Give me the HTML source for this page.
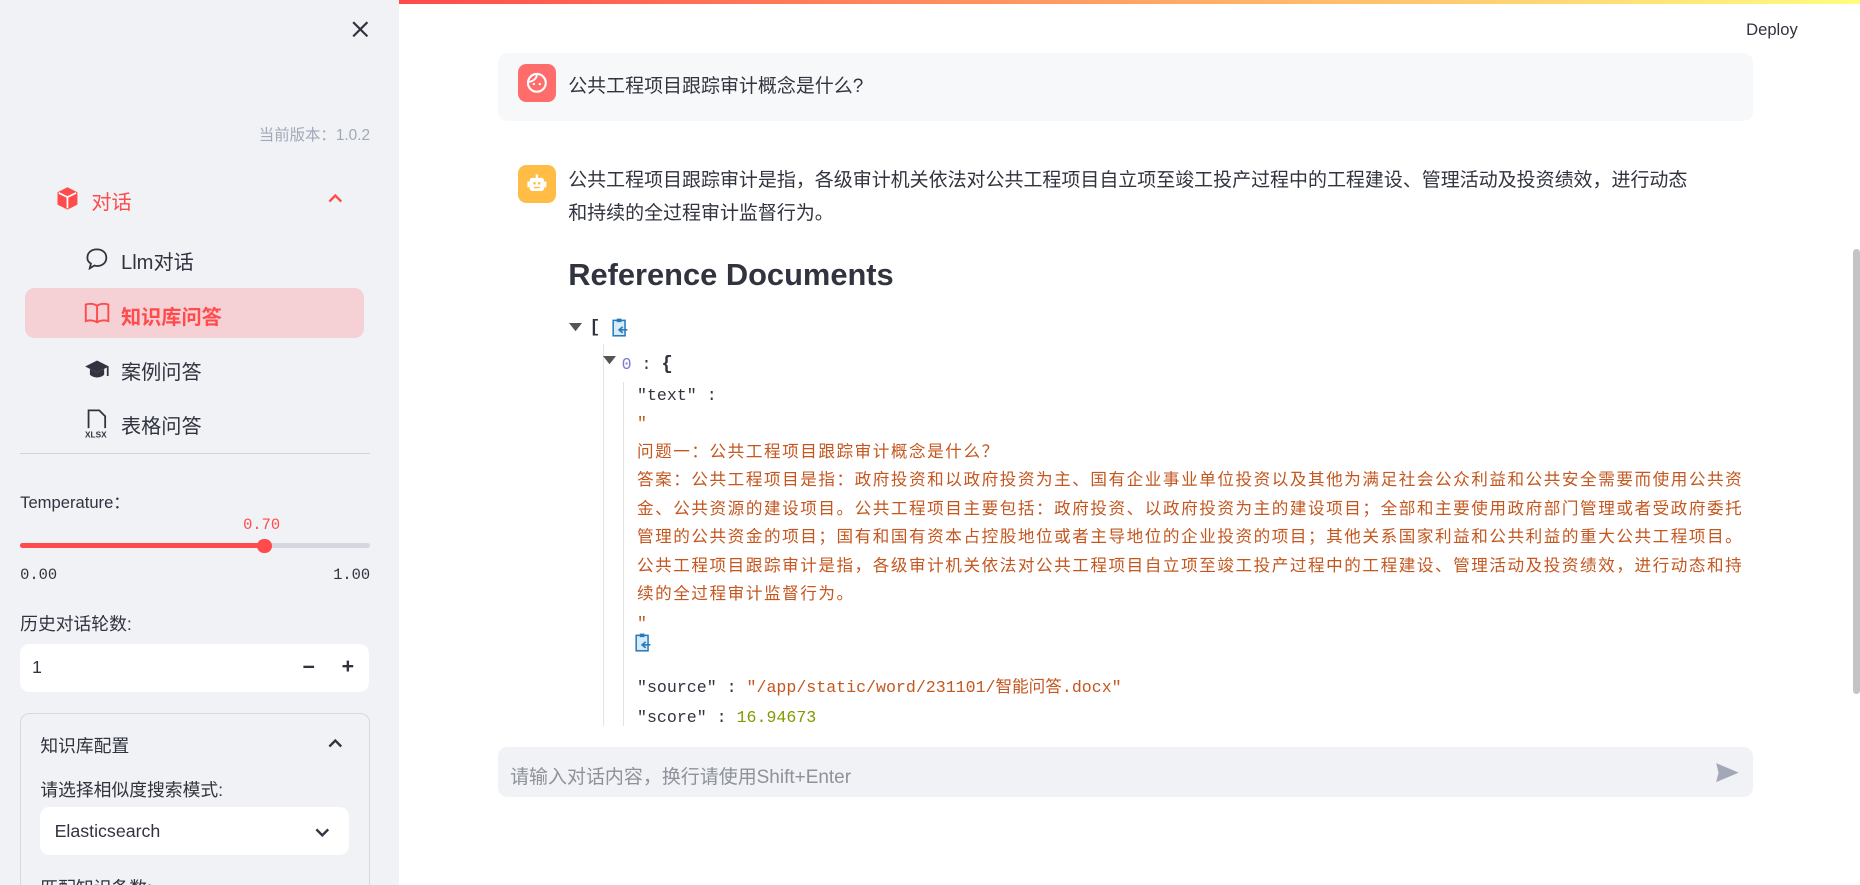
<!DOCTYPE html>
<html><head><meta charset="utf-8"><style>
*{margin:0;padding:0;box-sizing:border-box}
html,body{width:1860px;height:885px;overflow:hidden;background:#fff}
#root{zoom:1.18622;width:1568px;height:746px;position:relative;font-family:"Liberation Sans","Noto Sans CJK SC",sans-serif;color:#31333f}
.a{position:absolute;white-space:nowrap}
.mono{font-family:"Liberation Mono","Noto Sans CJK SC",monospace}
#sb{position:absolute;left:0;top:0;width:336px;height:746px;background:#f0f2f6}
.or{color:#c4571f}
</style></head><body><div id="root">
<div id="sb">
 <svg class="a" style="left:297px;top:18px" width="14" height="14" viewBox="0 0 14 14"><path d="M1 1L13 13M13 1L1 13" stroke="#31333f" stroke-width="1.8"/></svg>
 <div class="a" style="right:24px;top:104px;font-size:13px;color:#a3a8b8">当前版本：1.0.2</div>
 <svg class="a" style="left:46px;top:157px" width="21" height="21" viewBox="0 0 20 20"><path d="M10 1L18 5V15L10 19L2 15V5Z" fill="#ff4b4b"/><path d="M3 5.5L10 9L17 5.5M10 9V18" stroke="#fff" stroke-width="1.4" fill="none"/></svg>
 <div class="a" style="left:77px;top:157px;font-size:17px;color:#ff4b4b">对话</div>
 <svg class="a" style="left:276px;top:162px" width="14" height="10" viewBox="0 0 14 10"><path d="M2 8L7 3L12 8" stroke="#ff4b4b" stroke-width="2" fill="none"/></svg>
 <svg class="a" style="left:72px;top:208px" width="20" height="20" viewBox="0 0 20 20"><path d="M10 2C5 2 2 5 2 9C2 11 3 13 5 14L4 18L8 15.6C8.6 15.8 9.3 16 10 16C15 16 18 13 18 9C18 5 15 2 10 2Z" stroke="#31333f" stroke-width="1.5" fill="none"/></svg>
 <div class="a" style="left:102px;top:207px;font-size:17px">Llm对话</div>
 <div class="a" style="left:21px;top:243px;width:286px;height:42px;background:#f5d0d5;border-radius:8px"></div>
 <svg class="a" style="left:71px;top:254px" width="22" height="20" viewBox="0 0 22 20"><path d="M11 4C8 2 4 2 1.5 3V17C4 16 8 16 11 18C14 16 18 16 20.5 17V3C18 2 14 2 11 4ZM11 4V18" stroke="#ff4b4b" stroke-width="1.6" fill="none"/></svg>
 <div class="a" style="left:102px;top:254px;font-size:17px;color:#ff4b4b;font-weight:bold">知识库问答</div>
 <svg class="a" style="left:71px;top:301px" width="22" height="20" viewBox="0 0 22 20"><path d="M11 3L1 8L11 13L21 8Z" fill="#31333f"/><path d="M5 10V15C8 18 14 18 17 15V10L11 13Z" fill="#31333f"/><path d="M20 8V16" stroke="#31333f" stroke-width="1.5"/></svg>
 <div class="a" style="left:102px;top:300px;font-size:17px">案例问答</div>
 <svg class="a" style="left:72px;top:344px" width="20" height="26" viewBox="0 0 20 26"><path d="M3 17V2H12L17 7V17" stroke="#31333f" stroke-width="1.5" fill="none"/><text x="0" y="25" font-size="7" font-family="Liberation Sans" fill="#31333f" font-weight="bold">XLSX</text></svg>
 <div class="a" style="left:102px;top:346px;font-size:17px">表格问答</div>
 <div class="a" style="left:17px;top:382px;width:295px;height:1px;background:#d0d3da"></div>
 <div class="a" style="left:17px;top:412px;font-size:14px">Temperature：</div>
 <div class="a mono" style="left:205px;top:435px;font-size:13px;color:#ff4b4b">0.70</div>
 <div class="a" style="left:17px;top:458px;width:295px;height:4px;background:#d5d8de;border-radius:2px"></div>
 <div class="a" style="left:17px;top:458px;width:206px;height:4px;background:#ff4b4b;border-radius:2px"></div>
 <div class="a" style="left:217px;top:454px;width:12px;height:12px;background:#ff4b4b;border-radius:50%"></div>
 <div class="a mono" style="left:17px;top:477px;font-size:13px">0.00</div>
 <div class="a mono" style="right:24px;top:477px;font-size:13px">1.00</div>
 <div class="a" style="left:17px;top:514px;font-size:15px">历史对话轮数:</div>
 <div class="a" style="left:17px;top:543px;width:294px;height:40px;background:#fff;border-radius:8px"></div>
 <div class="a" style="left:27px;top:554px;font-size:15px">1</div>
 <div class="a" style="left:255px;top:552px;font-size:18px;font-weight:bold">−</div>
 <div class="a" style="left:288px;top:551px;font-size:18px;font-weight:bold">+</div>
 <div class="a" style="left:17px;top:601px;width:295px;height:160px;border:1px solid #d5d8de;border-radius:8px"></div>
 <div class="a" style="left:34px;top:617px;font-size:15px">知识库配置</div>
 <svg class="a" style="left:276px;top:621px" width="14" height="10" viewBox="0 0 14 10"><path d="M2 8L7 3L12 8" stroke="#31333f" stroke-width="2" fill="none"/></svg>
 <div class="a" style="left:34px;top:654px;font-size:15px">请选择相似度搜索模式:</div>
 <div class="a" style="left:34px;top:680px;width:260px;height:41px;background:#fff;border-radius:8px"></div>
 <div class="a" style="left:46px;top:692px;font-size:15px">Elasticsearch</div>
 <svg class="a" style="left:265px;top:697px" width="14" height="10" viewBox="0 0 14 10"><path d="M2 2L7 7L12 2" stroke="#31333f" stroke-width="2" fill="none"/></svg>
 <div class="a" style="left:34px;top:737px;font-size:15px">匹配知识条数:</div>
</div>
<div class="a" style="left:336px;top:0;width:1232px;height:3px;background:linear-gradient(90deg,#ff4b4b,#fffd80)"></div>
<div class="a" style="left:1472px;top:17px;font-size:14px">Deploy</div>
<div class="a" style="left:420px;top:45px;width:1058px;height:57px;background:#f7f8fa;border-radius:8px"></div>
<div class="a" style="left:437px;top:54px;width:32px;height:32px;background:#ff6c6c;border-radius:7px"></div>
<svg class="a" style="left:443px;top:60px" width="20" height="20" viewBox="0 0 20 20"><circle cx="10" cy="10" r="7.5" stroke="#fff" stroke-width="1.8" fill="none"/><path d="M3 9C7 9 10 6 10 3" stroke="#fff" stroke-width="1.6" fill="none"/><circle cx="7.5" cy="11" r="1" fill="#fff"/><circle cx="12.5" cy="11" r="1" fill="#fff"/></svg>
<div class="a" style="left:479px;top:60px;font-size:16px">公共工程项目跟踪审计概念是什么?</div>
<div class="a" style="left:437px;top:139px;width:32px;height:32px;background:#ffbd45;border-radius:7px"></div>
<svg class="a" style="left:443px;top:145px" width="20" height="20" viewBox="0 0 20 20"><rect x="4" y="5" width="12" height="11" rx="2" fill="#fff"/><rect x="9" y="2" width="2" height="3" fill="#fff"/><rect x="2" y="8" width="2" height="5" fill="#fff"/><rect x="16" y="8" width="2" height="5" fill="#fff"/><circle cx="8" cy="9.5" r="1.1" fill="#ffbd45"/><circle cx="12" cy="9.5" r="1.1" fill="#ffbd45"/><rect x="7.5" y="12.5" width="5" height="1.2" fill="#ffbd45"/></svg>
<div class="a" style="left:479px;top:138px;font-size:16px;line-height:28px;white-space:normal;width:955px">公共工程项目跟踪审计是指，各级审计机关依法对公共工程项目自立项至竣工投产过程中的工程建设、管理活动及投资绩效，进行动态和持续的全过程审计监督行为。</div>
<div class="a" style="left:479px;top:217px;font-size:26px;font-weight:bold">Reference Documents</div>
<svg class="a" style="left:480px;top:272px" width="11" height="8"><path d="M0 0H11L5.5 7Z" fill="#555"/></svg>
<div class="a mono" style="left:497px;top:268px;font-size:15px;font-weight:bold">[</div>
<svg class="a" style="left:516px;top:268px" width="14" height="16" viewBox="0 0 14 16"><rect x="1" y="2" width="10" height="13" stroke="#2a7ab8" stroke-width="1.3" fill="#d7ecfb"/><rect x="4" y="0.5" width="4" height="3" fill="#2a7ab8"/><path d="M6 10H13M9 7.5L6 10L9 12.5" stroke="#2a7ab8" stroke-width="1.4" fill="none"/></svg>
<div class="a" style="left:508px;top:290px;width:1px;height:322px;background:#e3e3e3"></div>
<svg class="a" style="left:508px;top:300px" width="11" height="8"><path d="M0 0H11L5.5 7Z" fill="#555"/></svg>
<div class="a mono" style="left:524px;top:298px;font-size:14px"><span style="color:#7b7bd0">0</span> : <b style="font-size:16px">{</b></div>
<div class="a" style="left:525px;top:322px;width:1px;height:290px;background:#e3e3e3"></div>
<div class="a mono" style="left:537px;top:325px;font-size:14px">"text" :</div>
<div class="a mono or" style="left:537px;top:346px;font-size:14px;letter-spacing:1.3px;line-height:24px;white-space:normal;width:945px">"<br>问题一：公共工程项目跟踪审计概念是什么？<br>答案：公共工程项目是指：政府投资和以政府投资为主、国有企业事业单位投资以及其他为满足社会公众利益和公共安全需要而使用公共资金、公共资源的建设项目。公共工程项目主要包括：政府投资、以政府投资为主的建设项目；全部和主要使用政府部门管理或者受政府委托管理的公共资金的项目；国有和国有资本占控股地位或者主导地位的企业投资的项目；其他关系国家利益和公共利益的重大公共工程项目。<br>公共工程项目跟踪审计是指，各级审计机关依法对公共工程项目自立项至竣工投产过程中的工程建设、管理活动及投资绩效，进行动态和持续的全过程审计监督行为。<br>"</div>
<svg class="a" style="left:535px;top:534px" width="14" height="16" viewBox="0 0 14 16"><rect x="1" y="2" width="10" height="13" stroke="#2a7ab8" stroke-width="1.3" fill="#d7ecfb"/><rect x="4" y="0.5" width="4" height="3" fill="#2a7ab8"/><path d="M6 10H13M9 7.5L6 10L9 12.5" stroke="#2a7ab8" stroke-width="1.4" fill="none"/></svg>
<div class="a mono" style="left:537px;top:567px;font-size:14px">"source" : <span class="or">"/app/static/word/231101/智能问答.docx"</span></div>
<div class="a mono" style="left:537px;top:597px;font-size:14px">"score" : <span style="color:#859900">16.94673</span></div>
<div class="a" style="left:336px;top:613px;width:1226px;height:133px;background:#fff"></div>
<div class="a" style="left:420px;top:630px;width:1058px;height:42px;background:#f0f2f6;border-radius:8px"></div>
<div class="a" style="left:430px;top:642px;font-size:16px;color:#8e919a">请输入对话内容，换行请使用Shift+Enter</div>
<svg class="a" style="left:1446px;top:642px" width="21" height="18" viewBox="0 0 21 18"><path d="M1 1L20 9L1 17L3 9Z" fill="#a3a8b8"/></svg>
<div class="a" style="left:1562px;top:210px;width:6px;height:375px;background:#c4c4c4;border-radius:3px"></div>
</div></body></html>
